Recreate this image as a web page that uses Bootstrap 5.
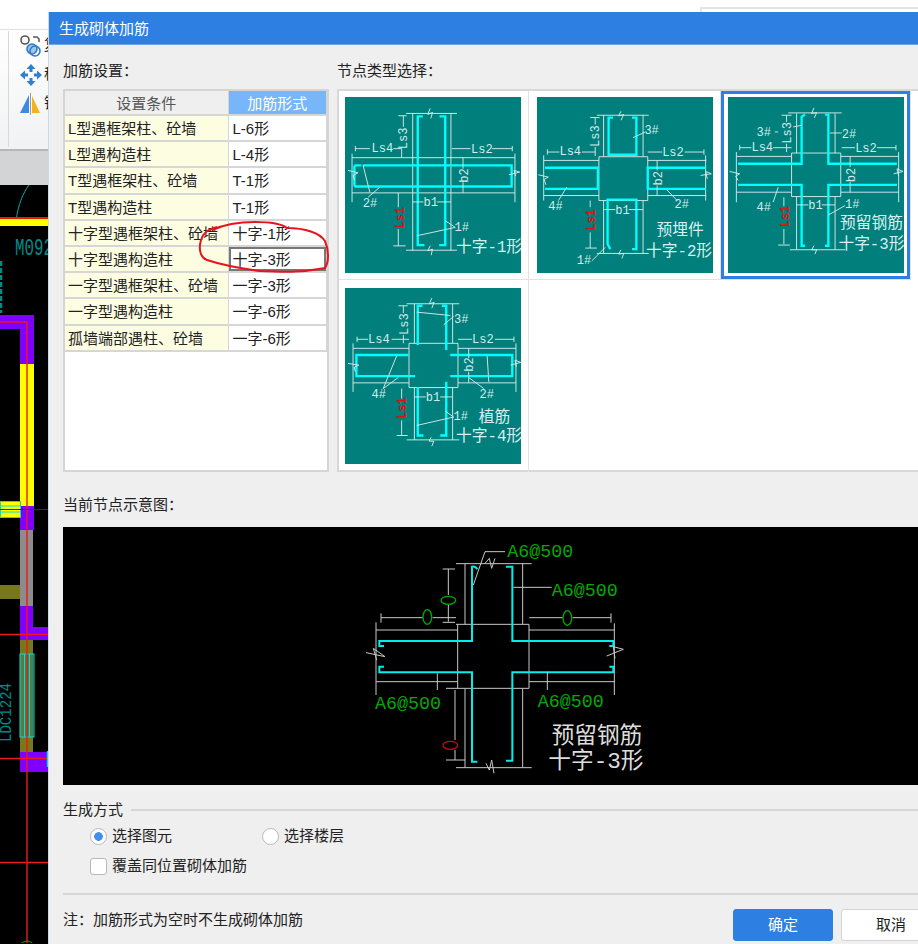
<!DOCTYPE html>
<html lang="zh-CN">
<head>
  <meta charset="UTF-8" />
  <meta name="viewport" content="width=device-width, initial-scale=1" />
  <title>生成砌体加筋</title>
  <link href="https://cdn.jsdelivr.net/npm/bootstrap@5.3.0/dist/css/bootstrap.min.css" rel="stylesheet" />
  <style>
    html, body { height: 944px; overflow: hidden; }
    body {
      background: #fff;
      font-family: "Liberation Sans", "Noto Sans CJK SC", sans-serif;
      font-size: 15px;
      color: #222;
      position: relative;
    }
    .app-shell { height: 944px; }
    .top-strip { height: 30px; background: #fff; border-bottom: 1px solid #e2e2e2; padding: 7px 0 0 700px; }
    .search-box { height: 30px; border: 2px solid #e4e4e4; border-right: 0; }
    .ribbon { height: 121px; background: linear-gradient(#fff, #f1f2f3); border-bottom: 2px solid #b5b7b9; padding: 1px 0 0 8px; }
    .ribbon-inner { height: 116px; border-left: 1px solid #d8d8d8; padding-left: 11px; }
    .ribbon-item { height: 29px; gap: 2px; font-size: 15px; white-space: nowrap; }
    .tab-strip { height: 34px; background: #d2d4d6; }
    .cad-canvas { background: #000; position: relative; }
    .cad-canvas svg { position: absolute; left: 0; top: 0; }

    .gen-dialog {
      position: absolute; left: 48px; top: 12px; width: 910px; height: 932px;
      background: #efefef; border-left: 1px solid #cfd8e2;
    }
    .dlg-title { height: 33px; background: #2d7fe2; color: #fff; line-height: 34px; padding-left: 10px; border-bottom: 1px solid #6ea6ea; }
    .dlg-body { padding: 0 14px; }
    .sec-label { height: 44px; padding-top: 15px; line-height: 22px; }
    .top-row { gap: 8px; }
    .left-col { width: 266px; flex: none; }
    .right-col { flex: none; }

    .rule-wrap { height: 383px; background: #fff; border: 2px solid #d4d4d4; border-top-width: 2px; }
    .rule-table { margin: 0; border-collapse: collapse; table-layout: fixed; width: 100%; }
    .rule-table th, .rule-table td {
      height: 26.2px; padding: 1px 0 0 3px; line-height: 23px; font-weight: 400; white-space: nowrap; overflow: hidden;
      border: 0; border-right: 1px solid #d6d6d6; border-bottom: 2px solid #d6d6d6; color: #222;
    }
    .rule-table th { height: 24px; text-align: center; padding: 1px 0 0; line-height: 21px; }
    .rule-table th.cond-head { background: #efefef; color: #555; }
    .rule-table th.form-head { background: #77b6f8; color: #fff; }
    .rule-table td.cond-cell { background: #fdfde2; }
    .rule-table td.form-cell { background: #fff; padding-left: 4px; }
    .rule-table td.picked { box-shadow: inset 0 0 0 2px #777; }

    .node-panel {
      width: 600px; height: 383px; background: #fff; border: 2px solid #d8d8d8;
      display: grid; grid-template-columns: 190px 192px 190px 192px; grid-template-rows: 189px 192px;
    }
    .node-cell { padding: 6px 0 0 6px; border-right: 1px solid #e2e2e2; border-bottom: 1px solid #e2e2e2; position: relative; }
    .node-cell:nth-child(2) { padding-left: 8px; }
    .node-cell:nth-child(3) { padding-left: 7px; }
    .node-cell.last-row { border-bottom: 0; padding-top: 8px; }
    .node-cell.blank { border: 0; }
    .node-cell.active::after { content: ""; position: absolute; left: 0; right: 0; top: 0; bottom: 0; border: 3px solid #2d7fe2; }
    .node-thumb { display: block; width: 176px; height: 176px; background: #007f7c; }

    .ln { stroke: #d4ecea; stroke-width: 2.8; fill: none; }
    .rb { stroke: #0ff; stroke-width: 7; fill: none; }
    .dt { font-family: "Liberation Mono", monospace; font-size: 36px; fill: #d4ecea; }
    .dr { font-family: "Liberation Mono", monospace; font-size: 36px; fill: #e01010; font-weight: 700; }
    .cj { font-family: "Liberation Mono", "Noto Sans CJK SC", sans-serif; font-size: 47px; fill: #d8efee; }

    .preview-label { height: 55px; padding-top: 22px; line-height: 22px; }
    .preview-box { width: 895px; height: 258px; background: #000; display: block; }
    .pl { stroke: #c8c8c8; stroke-width: 3; fill: none; }
    .pc { stroke: #0ee; stroke-width: 6; fill: none; }
    .pg { font-family: "Liberation Mono", monospace; font-size: 55px; fill: #0a0; }
    .pw { font-family: "Liberation Mono", "Noto Sans CJK SC", sans-serif; font-size: 68px; fill: #ddd; }

    .group-head { height: 36px; padding-top: 14px; gap: 8px; }
    .group-line { flex: 1; height: 2px; background: #d6d6d6; }
    .opt-row { padding-left: 27px; height: 30px; }
    .opt-row .form-check { margin: 0; padding: 0; min-height: 0; display: flex; align-items: center; gap: 5px; }
    .opt-row .form-check-input { margin: 0; float: none; width: 17px; height: 17px; background-color: #fff; border: 1.5px solid #b8b8b8; flex: none; }
    .opt-row .form-check-input[type=radio]:checked { background-image: radial-gradient(circle, #3f8ff0 0 4px, #fff 4.6px); border-color: #b8b8b8; }
    .opt-row .form-check-input:focus { box-shadow: none; }
    .opt-row .form-check-input[type=checkbox] { border-radius: 3px; }
    .radio-first { width: 172px; }
    .opt-row .form-check-label { line-height: 20px; }
    .bottom-rule { height: 2px; background: #d6d6d6; margin-top: 12px; }
    .dlg-foot { padding: 14px 3px 0 0; }
    .btn-ok, .btn-no { width: 100px; height: 32px; padding: 0; font-size: 15px; border-radius: 3px; }
    .btn-ok { background: #2d7fe2; border: 1px solid #2d7fe2; color: #fff; }
    .btn-no { background: #fff; border: 1px solid #d4d4d4; color: #222; }
    .mark-ring { position: absolute; left: 0; top: 0; pointer-events: none; }
  </style>
</head>
<body>
  <div class="app-shell d-flex flex-column">
    <div class="top-strip"><div class="search-box"></div></div>
    <div class="ribbon">
      <div class="ribbon-inner">
        <div class="ribbon-item d-flex align-items-center">
          <svg width="22" height="22" viewBox="0 0 22 22"><circle cx="5" cy="5" r="4" fill="none" stroke="#555" stroke-width="1.6"/><path d="M13 2h4l2 2v3" fill="none" stroke="#555" stroke-width="1.5"/><circle cx="12" cy="14" r="5" fill="#9cc6ea" stroke="#2f79c8" stroke-width="1.6"/><circle cx="15" cy="16" r="5" fill="none" stroke="#2f79c8" stroke-width="1.6"/></svg>
          <span>复</span>
        </div>
        <div class="ribbon-item d-flex align-items-center">
          <svg width="22" height="22" viewBox="0 0 22 22" fill="#2f7fd0"><path d="M11 0l4.500 5h-3v3h-3V5h-3zM11 22l-4.500-5h3v-3h3v3h3zM0 11l5-4.500v3h3v3H5v3zM22 11l-5 4.500v-3h-3v-3h3v-3z"/></svg>
          <span>移</span>
        </div>
        <div class="ribbon-item d-flex align-items-center">
          <svg width="22" height="22" viewBox="0 0 22 22"><path d="M9 2v18H0z" fill="#3f8ae0"/><path d="M12 3v17h8z" fill="#f5b21c"/><path d="M10.500 0v22" stroke="#999"/></svg>
          <span>镜</span>
        </div>
      </div>
    </div>
    <div class="tab-strip"></div>
    <div class="cad-canvas flex-grow-1">
      <svg width="48" height="758" viewBox="0 186 48 758">
        <path d="M16 222C18 206 23 194 29 186" fill="none" stroke="#0aa" stroke-width="1"/>
        <rect x="0" y="218" width="48" height="9" fill="#ff0"/>
        <rect x="0" y="218" width="48" height="2" fill="#e02000"/>
        <text x="15" y="256" font-family="Liberation Mono" font-size="23" fill="#008a8a" textLength="38" lengthAdjust="spacingAndGlyphs">M092</text>
        <path d="M1 262v52" stroke="#008a8a" stroke-width="2.500" stroke-dasharray="5 2"/>
        <path d="M0 316h34v49H20v-35H0z" fill="#8000ff"/>
        <rect x="20" y="365" width="14" height="142" fill="#ff0"/>
        <rect x="20" y="507" width="14" height="24" fill="#8000ff"/>
        <rect x="20" y="531" width="13" height="76" fill="#8c8c8c"/>
        <rect x="0" y="586" width="20" height="14" fill="#77771c"/>
        <path d="M20 607h13v21h15v13H20z" fill="#8000ff"/>
        <rect x="20" y="641" width="13" height="112" fill="#77771c"/>
        <rect x="20" y="753" width="28" height="20" fill="#8000ff"/>
        <rect x="0.500" y="502.500" width="20" height="16" fill="#ff0" stroke="#0dd"/>
        <path d="M0 507h20M0 513h20" stroke="#0dd"/>
        <rect x="20" y="655" width="14" height="83" fill="#1f8a7a" fill-opacity=".4" stroke="#0dd"/>
        <path d="M24.500 655v83M29.500 655v83" stroke="#0dd"/>
        <path d="M0 323h27M27 323v621M0 635.500h48M0 759.500h48M0 863.500h48" stroke="#f01818" stroke-width="1.400" fill="none"/>
        <path d="M0 510.500h48" stroke="#900" stroke-width="1"/>
        <path d="M47.500 752v16" stroke="#0dd" stroke-width="1.500"/>
        <text transform="translate(11 743) rotate(-90)" font-family="Liberation Mono" font-size="17" fill="#008a8a" textLength="59" lengthAdjust="spacingAndGlyphs">LDC1224</text>
        <circle cx="27" cy="950" r="8" fill="none" stroke="#0a0"/>
      </svg>
    </div>
  </div>

  <div class="gen-dialog">
    <div class="dlg-title">生成砌体加筋</div>
    <div class="dlg-body">
      <div class="top-row d-flex">
        <div class="left-col">
          <div class="sec-label">加筋设置&#xFF1A;</div>
          <div class="rule-wrap">
            <table class="table rule-table">
              <colgroup><col style="width:163px"><col></colgroup>
              <thead><tr><th class="cond-head">设置条件</th><th class="form-head">加筋形式</th></tr></thead>
              <tbody>
                <tr><td class="cond-cell">L型遇框架柱、砼墙</td><td class="form-cell">L-6形</td></tr>
                <tr><td class="cond-cell">L型遇构造柱</td><td class="form-cell">L-4形</td></tr>
                <tr><td class="cond-cell">T型遇框架柱、砼墙</td><td class="form-cell">T-1形</td></tr>
                <tr><td class="cond-cell">T型遇构造柱</td><td class="form-cell">T-1形</td></tr>
                <tr><td class="cond-cell">十字型遇框架柱、砼墙</td><td class="form-cell">十字-1形</td></tr>
                <tr><td class="cond-cell">十字型遇构造柱</td><td class="form-cell picked">十字-3形</td></tr>
                <tr><td class="cond-cell">一字型遇框架柱、砼墙</td><td class="form-cell">一字-3形</td></tr>
                <tr><td class="cond-cell">一字型遇构造柱</td><td class="form-cell">一字-6形</td></tr>
                <tr><td class="cond-cell">孤墙端部遇柱、砼墙</td><td class="form-cell">一字-6形</td></tr>
              </tbody>
            </table>
          </div>
        </div>
        <div class="right-col">
          <div class="sec-label">节点类型选择&#xFF1A;</div>
          <div class="node-panel">
            <div class="node-cell">
              <svg class="node-thumb" viewBox="31 36 525 525">
                <path class="ln" d="M233 85V495M347 85V495M213 85H365M213 493H365M52 217H538M52 322H538M52 205V350M538 205V350"/>
                <path class="rb" d="M80 240H62L59 244V298L62 303H528V240H84M263 94H248V478H268M313 94H330V478H312"/>
                <path class="ln" d="M62 190H105M175 190H200M62 182V198M350 190H405M470 190H530M530 182V198M205 92V125M190 92H215M200 190V215M383 217V250M383 290V322M233 349H265M305 349H347M190 322V365M190 430V480M175 480H212M245 450L360 425M330 405L360 425M85 240L105 320M135 305L100 335M285 70L278 88L292 82L287 100M285 480L278 495L292 490L288 508M40 255L70 262L55 270L60 285M520 268L552 260L535 255L540 272"/>
                <text class="dt" x="110" y="200">Ls4</text>
                <text class="dt" x="407" y="202">Ls2</text>
                <text class="dt" transform="translate(217 192) rotate(-90)">Ls3</text>
                <text class="dt" transform="translate(397 292) rotate(-90)">b2</text>
                <text class="dt" x="265" y="361">b1</text>
                <text class="dr" transform="translate(207 428) rotate(-90)">Ls1</text>
                <text class="dt" x="358" y="436">1#</text>
                <text class="dt" x="84" y="363">2#</text>
                <text class="cj" x="362" y="497">十字-1形</text>
              </svg>
            </div>
            <div class="node-cell">
              <svg class="node-thumb" viewBox="21 36 526 525">
                <path class="ln" d="M206 214H352V345H206ZM220 90V214M338 90V214M200 90H355M220 345V503M338 345V503M200 503H355M41 225H206M41 330H206M41 210V345M352 225H527M352 330H527M525 210V345"/>
                <path class="rb" d="M248 97H235V208H318V97H305M240 490L232 475V342H318V490H305M55 247H45H203V310H45M525 247H352V310H525"/>
                <path class="ln" d="M52 200H88M155 200H195M52 192V208M352 200H395M462 200H520M520 192V208M195 97V118M195 185V212M180 97H208M380 225V255M380 300V330M222 372H255M295 372H338M180 345V365M180 440V487M165 487H200M308 157L345 140M110 305L85 345M408 312L440 345M225 485L185 525M272 78L265 92L280 88L272 105M272 492L265 505L280 503L275 518M25 268L55 275L42 282L48 298M510 270L542 265L525 258L530 280"/>
                <text class="dt" x="88" y="210">Ls4</text>
                <text class="dt" x="395" y="212">Ls2</text>
                <text class="dt" transform="translate(207 185) rotate(-90)">Ls3</text>
                <text class="dt" transform="translate(394 300) rotate(-90)">b2</text>
                <text class="dt" x="255" y="384">b1</text>
                <text class="dr" transform="translate(195 435) rotate(-90)">Ls1</text>
                <text class="dt" x="342" y="146">3#</text>
                <text class="dt" x="55" y="373">4#</text>
                <text class="dt" x="432" y="366">2#</text>
                <text class="dt" x="140" y="536">1#</text>
                <text class="cj" x="378" y="449">预埋件</text>
                <text class="cj" x="347" y="510">十字-2形</text>
              </svg>
            </div>
            <div class="node-cell active">
              <svg class="node-thumb" viewBox="595 36 526 525">
                <path class="ln" d="M785 203H932V333H785ZM800 85V203M915 85V203M775 83H935M800 333V492M915 333V492M780 492H945M620 213H785M620 320H785M620 200V350M932 213H1105M932 320H1105M1105 200V350"/>
                <path class="rb" d="M825 88L815 95V235H625M885 88H895V235H1100M625 298H815V480H825M1100 298H895V480H885"/>
                <path class="ln" d="M630 187H665M730 187H785M630 179V195M935 187H975M1040 187H1097M1097 179V195M770 90V110M770 175V200M755 90H785M960 213V245M960 290V320M800 358H835M875 358H915M762 335V362M762 430V475M745 478H780M790 125L815 120M735 140H745M900 143H935M895 388L945 360M745 305L730 350M852 68L845 85L860 82L853 98M852 480L845 492L860 492L855 505M600 258L630 265L618 272L625 285M1090 265L1118 258L1100 250L1105 272"/>
                <text class="dt" x="665" y="198">Ls4</text>
                <text class="dt" x="975" y="199">Ls2</text>
                <text class="dt" transform="translate(782 175) rotate(-90)">Ls3</text>
                <text class="dt" transform="translate(974 290) rotate(-90)">b2</text>
                <text class="dt" x="835" y="370">b1</text>
                <text class="dr" transform="translate(778 425) rotate(-90)">Ls1</text>
                <text class="dt" x="680" y="151">3#</text>
                <text class="dt" x="935" y="158">2#</text>
                <text class="dt" x="945" y="366">1#</text>
                <text class="dt" x="680" y="376">4#</text>
                <text class="cj" x="930" y="426">预留钢筋</text>
                <text class="cj" x="925" y="490">十字-3形</text>
              </svg>
            </div>
            <div class="node-cell blank"></div>
            <div class="node-cell last-row">
              <svg class="node-thumb" viewBox="31 25 525 525">
                <path class="ln" d="M222 190H368V322H222ZM238 72V190M352 72V190M215 72H372M238 322V478M352 322V478M215 478H372M55 205H222M55 308H222M55 190V335M368 205H541M368 308H541M541 190V335"/>
                <path class="rb" d="M262 78H248V195M320 78H333V210M248 320V465H265M333 305V465H315M220 225H65V288H240M345 225H530V288H345"/>
                <path class="ln" d="M67 178H100M170 178H222M67 170V186M368 178H410M478 178H535M535 170V186M205 78V100M205 165V190M190 78H218M400 205V235M400 275V308M238 350H272M315 350H352M200 325V355M200 420V465M185 465H218M245 97L345 107M355 110L325 135M185 228L145 325M190 292L145 325M455 228L460 305M400 292L445 325M245 435L355 410M330 392L355 410M290 55L283 72L297 68L290 85M288 470L282 482L296 482L290 497M40 250L72 255L58 262L62 275M525 255L555 247L538 240L542 260"/>
                <text class="dt" x="100" y="188">Ls4</text>
                <text class="dt" x="410" y="189">Ls2</text>
                <text class="dt" transform="translate(218 165) rotate(-90)">Ls3</text>
                <text class="dt" transform="translate(413 275) rotate(-90)">b2</text>
                <text class="dt" x="272" y="362">b1</text>
                <text class="dr" transform="translate(212 416) rotate(-90)">Ls1</text>
                <text class="dt" x="356" y="128">3#</text>
                <text class="dt" x="110" y="353">4#</text>
                <text class="dt" x="432" y="353">2#</text>
                <text class="dt" x="355" y="419">1#</text>
                <text class="cj" x="430" y="425">植筋</text>
                <text class="cj" x="362" y="482">十字-4形</text>
              </svg>
            </div>
            <div class="node-cell blank"></div>
            <div class="node-cell blank"></div>
            <div class="node-cell blank"></div>
          </div>
        </div>
      </div>

      <div class="preview-label">当前节点示意图&#xFF1A;</div>
      <svg class="preview-box" viewBox="-861 -9 2685 774">
        <path class="pl" d="M345 101V283M518 101V283M318 101H545M318 713H545M345 476V713M518 476V713M323 283V475M537 283V475M318 283H537M288 475H537M78 300H323M78 455H323M78 277V495M537 300H793M537 455H793M793 280V495"/>
        <path class="pc" d="M382 118Q376 108 366 110V333H88V348H102M468 110H487V333H790V348H778M102 410H88V427H366V695H382M778 410H790V427H487V692H468"/>
        <path class="pl" d="M93 263H218M248 263H318M93 250V278M538 263H638M668 263H783M783 250V278M295 117V195M295 225V275M278 117H315M278 277H315M315 480V630M315 660V690M288 690H345M262 430V480M592 425V480M370 165L405 65H465M490 172H605M405 100L418 85L425 115L435 85M408 700L418 720L425 690L432 730M48 368L105 380L70 355L80 390M770 378L820 358L790 350L795 385"/>
        <ellipse cx="232" cy="261" rx="13" ry="22" fill="none" stroke="#0a0" stroke-width="4"/>
        <ellipse cx="652" cy="264" rx="13" ry="22" fill="none" stroke="#0a0" stroke-width="4"/>
        <ellipse cx="295" cy="211" rx="22" ry="12" fill="none" stroke="#0a0" stroke-width="4"/>
        <ellipse cx="301" cy="646" rx="22" ry="12" fill="none" stroke="#c01010" stroke-width="4"/>
        <text class="pg" x="472" y="82">A6@500</text>
        <text class="pg" x="605" y="199">A6@500</text>
        <text class="pg" x="75" y="537">A6@500</text>
        <text class="pg" x="563" y="530">A6@500</text>
        <text class="pw" x="605" y="638">预留钢筋</text>
        <text class="pw" x="595" y="714">十字-3形</text>
      </svg>

      <div class="group-head d-flex align-items-center">
        <span>生成方式</span><div class="group-line"></div>
      </div>
      <div class="opt-row d-flex align-items-center">
        <div class="form-check radio-first">
          <input class="form-check-input" type="radio" name="genWay" id="wayPick" checked />
          <label class="form-check-label" for="wayPick">选择图元</label>
        </div>
        <div class="form-check">
          <input class="form-check-input" type="radio" name="genWay" id="wayFloor" />
          <label class="form-check-label" for="wayFloor">选择楼层</label>
        </div>
      </div>
      <div class="opt-row d-flex align-items-center">
        <div class="form-check">
          <input class="form-check-input" type="checkbox" id="overrideSame" />
          <label class="form-check-label" for="overrideSame">覆盖同位置砌体加筋</label>
        </div>
      </div>
      <div class="bottom-rule"></div>
      <div class="dlg-foot d-flex justify-content-between align-items-start">
        <div>注&#xFF1A;加筋形式为空时不生成砌体加筋</div>
        <div class="d-flex gap-2">
          <button type="button" class="btn btn-ok">确定</button>
          <button type="button" class="btn btn-no">取消</button>
        </div>
      </div>
    </div>
  </div>

  <svg class="mark-ring" width="918" height="944" viewBox="0 0 918 944">
    <path d="M217 227C207 230 203 233 201 240C198 250 201 258 207 260C225 266 245 269 260 271C280 272 300 273 325 268C329 262 329 250 325 241C320 233 305 228 287 228C282 224 272 222 255 222C240 222 225 224 212 230" fill="none" stroke="#e8141c" stroke-width="2"/>
  </svg>
</body>
</html>
